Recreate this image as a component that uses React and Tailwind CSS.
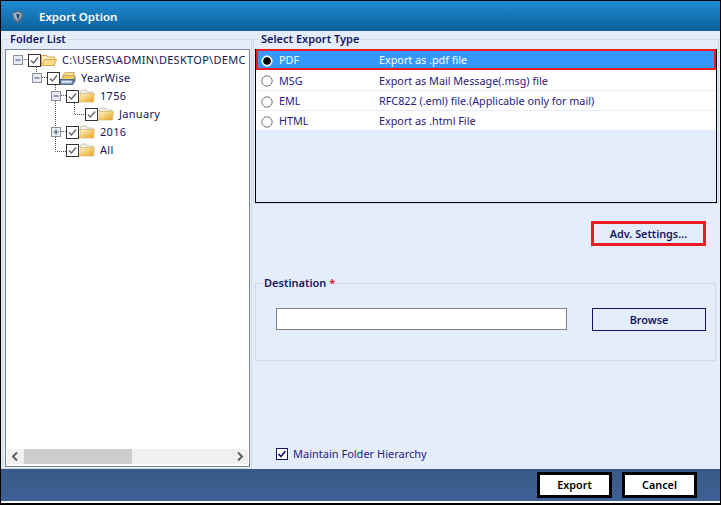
import React from "react";

function Check() {
  return (
    <svg width="13" height="13" viewBox="0 0 13 13" className="shrink-0 block">
      <rect x="0.5" y="0.5" width="12" height="12" fill="#fff" stroke="#333" />
      <path d="M3 6.5 L5.5 9 L10 3.5" fill="none" stroke="#6a6a6a" strokeWidth="1.5" />
    </svg>
  );
}

function Folder({ open }) {
  return (
    <svg width="16" height="14" viewBox="0 0 16 14" className="shrink-0 block">
      <defs>
        <linearGradient id="fg" x1="0" y1="0" x2="1" y2="1">
          <stop offset="0" stopColor="#fff6d0" />
          <stop offset="1" stopColor="#e8a015" />
        </linearGradient>
      </defs>
      {open ? (
        <>
          <path d="M0.5 12.5 V2.5 H5.5 L7 4 H13.5 V12.5 Z" fill="#fdf0c4" stroke="#d9a441" />
          <path d="M0.5 12.5 L3.5 6.5 H15.5 L13 12.5 Z" fill="#f8dc8a" stroke="#d9a441" />
        </>
      ) : (
        <>
          <path d="M1 3 L3 1 H7 L8.5 3 H14 V5 H1 Z" fill="#f4f0e2" stroke="#a9a58f" strokeWidth="0.6" />
          <path d="M0.5 13 L1.5 4.5 H15.5 L14.5 13 Z" fill="url(#fg)" stroke="#d8b36a" strokeWidth="0.6" />
        </>
      )}
    </svg>
  );
}

function Stack() {
  return (
    <svg width="16" height="15" viewBox="0 0 16 15" className="shrink-0 block">
      <path d="M2 6 L5 1.5 H14.5 L13 6 Z" fill="#f6dc94" stroke="#b89a52" strokeWidth="0.7" />
      <path d="M1 9 L3.5 4.5 H15 L13 9 Z" fill="#f2c964" stroke="#b89a52" strokeWidth="0.7" />
      <rect x="0.5" y="8.5" width="12.5" height="5" fill="#8aa0bf" stroke="#44587a" strokeWidth="0.8" />
      <rect x="2" y="10" width="9.5" height="1.6" fill="#e8eef7" />
      <path d="M13 9 L15.5 5 V10 L13 13.5 Z" fill="#5d7496" />
    </svg>
  );
}

function Expander({ plus }) {
  return (
    <svg width="10" height="10" viewBox="0 0 10 10" className="shrink-0 block">
      <rect x="0.5" y="0.5" width="9" height="9" fill="#e8ebf0" stroke="#8a8f98" />
      <path d={plus ? "M2.5 5 H7.5 M5 2.5 V7.5" : "M2.5 5 H7.5"} stroke="#3a4a78" strokeWidth="1" />
    </svg>
  );
}

function TreeRow({ pad, icon, label }) {
  return (
    <div className="flex h-[18px] items-center text-[11px] tracking-[0.3px] text-[#16164f] relative" style={{ paddingLeft: pad }}>
      <Check />
      {icon}
      <span className="ml-[5px] whitespace-nowrap">{label}</span>
    </div>
  );
}

const typeRows = [
  ["PDF", "Export as .pdf file"],
  ["MSG", "Export as Mail Message(.msg) file"],
  ["EML", "RFC822 (.eml) file.(Applicable only for mail)"],
  ["HTML", "Export as .html File"],
];

function Radio({ on }) {
  return (
    <svg width="12" height="12" viewBox="0 0 12 12" className="shrink-0 block">
      <circle cx="6" cy="6" r="5.2" fill="#fff" stroke={on ? "#e8e8e8" : "#777"} />
      {on && <circle cx="6" cy="6" r="3.8" fill="#000" />}
    </svg>
  );
}

export default function App() {
  return (
    <div className="w-[721px] h-[505px] flex flex-col bg-white border-l border-r border-t border-b-2 border-black font-['Noto_Sans',sans-serif] overflow-hidden">
      <div className="h-[30px] shrink-0 flex items-center pt-[2px] bg-gradient-to-b from-[#1f8cd4] to-[#0c6199]">
        <svg width="15" height="15" viewBox="0 0 15 15" className="ml-[9px] mr-[14px] block">
          <path d="M1 3 L8 0.5 L14 3 L12.5 9 L8 14 L3 10 Z" fill="#4f6c8c" />
          <path d="M3 3.5 L8 2 L12 4 L10.5 8 L7.5 11 L4.5 8.5 Z" fill="#9fb2c6" />
          <path d="M6 4 L10 4.5 L8 10 Z" fill="#2f4660" />
        </svg>
        <span className="text-[11.5px] font-semibold text-white">Export Option</span>
      </div>

      <div className="flex-1 min-h-0 flex bg-[#e3edfc] pt-[1px]">
        <fieldset className="w-[250px] ml-[1px] shrink-0 border border-[#d5dae2] flex flex-col px-[1px] pb-[1px]">
          <legend className="ml-[5px] px-[1px] text-[11px] leading-[14px] font-semibold text-[#16165e]">Folder List</legend>
          <div className="relative flex-1 min-h-0 flex flex-col border border-[#7f8690] bg-white ml-[1px] mt-[3px] w-[245px] overflow-hidden">
            <svg width="120" height="110" className="absolute left-[1px] top-[1px] block">
              <g stroke="#555" strokeDasharray="1 1" fill="none">
                <path d="M16.5 8.5 H22" />
                <path d="M29.5 14 V22" />
                <path d="M35 26.5 H40" />
                <path d="M48.5 32 V100.5 H59" />
                <path d="M54 44.5 H59" />
                <path d="M67.5 50 V63.5 H78" />
                <path d="M54 80.5 H59" />
              </g>
            </svg>
            <div className="flex-1 relative pt-[1px]">
              <div className="relative">
                <div className="absolute left-[7px] top-[4px]"><Expander /></div>
                <div className="absolute left-[26px] top-[22px]"><Expander /></div>
                <div className="absolute left-[45px] top-[40px]"><Expander /></div>
                <div className="absolute left-[45px] top-[76px]"><Expander plus /></div>
                <TreeRow pad={22} icon={<Folder open />} label="C:\USERS\ADMIN\DESKTOP\DEMC" />
                <TreeRow pad={41} icon={<Stack />} label="YearWise" />
                <TreeRow pad={60} icon={<Folder />} label="1756" />
                <TreeRow pad={79} icon={<Folder />} label="January" />
                <TreeRow pad={60} icon={<Folder />} label="2016" />
                <TreeRow pad={60} icon={<Folder />} label="All" />
              </div>
            </div>
            <div className="h-[15px] mx-[1px] mb-[2px] flex items-center bg-[#f0f0f0]">
              <svg width="17" height="15" viewBox="0 0 17 15" className="block shrink-0">
                <path d="M10 3.5 L6 7.5 L10 11.5" fill="none" stroke="#606060" strokeWidth="2" />
              </svg>
              <div className="w-[108px] h-[15px] bg-[#cdcdcd]" />
              <div className="flex-1" />
              <svg width="16" height="15" viewBox="0 0 16 15" className="block shrink-0">
                <path d="M6 3.5 L10 7.5 L6 11.5" fill="none" stroke="#606060" strokeWidth="2" />
              </svg>
            </div>
          </div>
        </fieldset>

        <div className="flex-1 min-w-0 flex flex-col">
          <fieldset className="h-[172px] ml-[1px] mr-[1px] border border-[#d5dae2] pl-[1px] flex flex-col">
            <legend className="ml-[5px] px-[1px] text-[11px] leading-[14px] font-semibold text-[#16165e]">Select Export Type</legend>
            <div className="h-[154px] mt-[3px] border border-black border-t-0 w-[462px] bg-[#e3edfc]">
              {typeRows.map(([a, b], i) => (
                <div
                  key={a}
                  className={
                    i === 0
                      ? "h-[21px] flex items-center pt-[2px] bg-[#3399ff] border-2 border-[#ed1c24] text-white text-[10.8px]"
                      : i === 1
                      ? "h-[21px] flex items-center pt-[2px] pl-[2px] pr-[2px] bg-white border-b border-[#e3edfc] text-[#2a1a80] text-[10.8px]"
                      : "h-[20px] flex items-center pt-[2px] pl-[2px] pr-[2px] bg-white border-b border-[#e3edfc] text-[#2a1a80] text-[10.8px]"
                  }
                >
                  <div className="ml-[3px]"><Radio on={i === 0} /></div>
                  <span className="w-[100px] ml-[6px]">{a}</span>
                  <span>{b}</span>
                </div>
              ))}
            </div>
          </fieldset>

          <div className="flex justify-end mt-[17px] pr-[14px]">
            <button className="w-[115px] h-[25px] border-[3px] border-[#ed1c24] pt-[1px] text-[10.8px] font-semibold text-[#16165e]">Adv. Settings...</button>
          </div>

          <fieldset className="h-[85px] mt-[30px] ml-[3px] mr-[4px] border border-[#d5dae2] flex flex-col">
            <legend className="ml-[7px] px-[1px] text-[11px] leading-[14px] font-semibold text-[#16165e]">
              Destination <span className="text-[#e0101c]">*</span>
            </legend>
            <div className="flex items-start mt-[18px] ml-[20px]">
              <div className="w-[291px] h-[22px] bg-white border border-[#808080]" />
              <button className="ml-[25px] w-[114px] h-[23px] pt-[1px] border border-[#16166e] text-[10.8px] font-semibold text-[#16165e]">Browse</button>
            </div>
          </fieldset>

          <div className="flex-1" />
          <label className="flex items-center mb-[7px] ml-[24px]">
            <svg width="12" height="12" viewBox="0 0 12 12" className="block">
              <rect x="0.5" y="0.5" width="11" height="11" fill="#fff" stroke="#16166e" />
              <path d="M2.5 6 L5 8.5 L9.5 3" fill="none" stroke="#16166e" strokeWidth="1.7" />
            </svg>
            <span className="ml-[5px] text-[11px] text-[#2a1a80]">Maintain Folder Hierarchy</span>
          </label>
        </div>
      </div>

      <div className="h-[32px] shrink-0 flex justify-end items-start pt-[3px] pr-[23px] gap-[10px] bg-gradient-to-b from-[#375985] to-[#3e6296]">
        <button className="w-[75px] h-[26px] bg-white border-[3px] border-black text-[10.8px] font-semibold text-black">Export</button>
        <button className="w-[75px] h-[26px] bg-white border-[3px] border-black text-[10.8px] font-semibold text-black">Cancel</button>
      </div>
      <div className="h-[2px] shrink-0 bg-white" />
    </div>
  );
}
